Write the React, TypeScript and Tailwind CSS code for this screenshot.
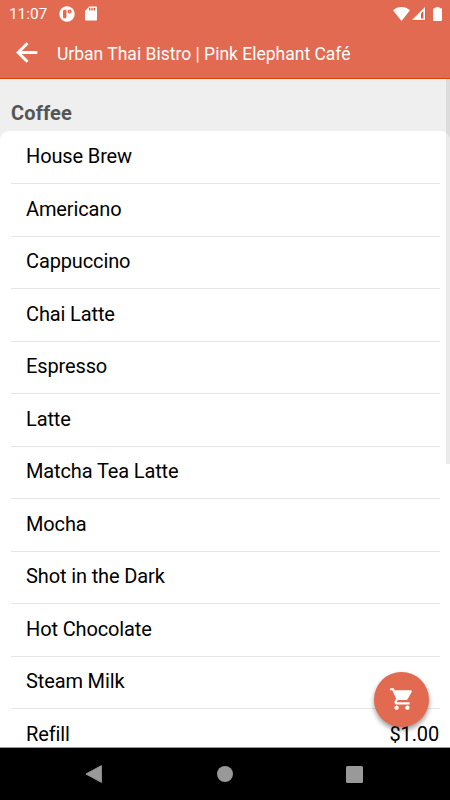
import { MdShoppingCart } from "react-icons/md";

const items = [
  { name: "House Brew" },
  { name: "Americano" },
  { name: "Cappuccino" },
  { name: "Chai Latte" },
  { name: "Espresso" },
  { name: "Latte" },
  { name: "Matcha Tea Latte" },
  { name: "Mocha" },
  { name: "Shot in the Dark" },
  { name: "Hot Chocolate" },
  { name: "Steam Milk" },
  { name: "Refill", price: "$1.00" },
];

function StatusBar() {
  return (
    <div className="flex h-[27px] items-center pl-[9px] pr-2 text-white">
      <span className="w-[50px] pt-px text-[15.5px] leading-[26px] tracking-[-0.1px]">11:07</span>
      <svg className="h-4 w-4" viewBox="0 0 16 16">
        <circle cx="8" cy="8" r="7.7" fill="#fff" />
        <path d="M4 5.200a1.500 1.500 0 0 1 1.500-1.500H7.500v7a1.750 1.750 0 0 1-3.500 0z" fill="#e26a50" />
        <circle cx="10.600" cy="5.600" r="2" fill="#e26a50" />
        <circle cx="10.600" cy="5.600" r="0.700" fill="#f3bfb3" />
      </svg>
      <svg className="ml-[10px] h-[15px] w-3" viewBox="0 0 12 15">
        <path d="M4.500.500H11a1 1 0 0 1 1 1V13.500a1 1 0 0 1-1 1H1a1 1 0 0 1-1-1V5z" fill="#fff" />
        <path d="M4.700 2v2.500M7 2v2.500M9.300 2v2.500" stroke="#e04428" strokeWidth="1.200" />
      </svg>
      <svg className="ml-auto h-[14px] w-[17px]" viewBox="0 0 17 14">
        <path d="M8.500 14 0 3.300C2.300 1.200 5.200 0 8.500 0S14.700 1.200 17 3.300z" fill="#fff" />
      </svg>
      <svg className="ml-px h-[15px] w-[15px]" viewBox="0 0 15 15">
        <path d="M14.500.500v14H.500z" fill="#fff" />
        <path d="M14.500.500v14H.500" fill="none" stroke="#e0471c" strokeWidth="0.800" />
        <path d="M10 7.500 12.300 5v7.500H10z" fill="#e2583c" />
      </svg>
      <svg className="ml-[7px] h-[14px] w-[9px]" viewBox="0 0 9 14">
        <path d="M2.700 0h3.600v1.300H8a1 1 0 0 1 1 1V13a1 1 0 0 1-1 1H1a1 1 0 0 1-1-1V2.300a1 1 0 0 1 1-1h1.700z" fill="#fff" />
      </svg>
    </div>
  );
}

export default function App() {
  return (
    <div className="relative flex h-[800px] w-[450px] flex-col overflow-hidden bg-white font-['Roboto',sans-serif]">
      <header className="h-[79px] shrink-0 border-b border-[#d8430a] bg-[#e26a50]">
        <StatusBar />
        <div className="flex h-[51px] items-center pl-4 text-white">
          <svg className="h-[21px] w-[22px]" viewBox="0 0 22 21" fill="none" stroke="currentColor" strokeWidth="3">
            <path d="M11.500 1.300 2.200 10.500l9.300 9.200M2.200 10.500H21.300" />
          </svg>
          <h1 className="ml-[19px] pt-[3px] text-[17.5px] font-normal">Urban Thai Bistro | Pink Elephant Café</h1>
        </div>
      </header>

      <main className="relative min-h-0 flex-1 overflow-hidden bg-[#efefef]">
        <h2 className="flex h-[51.5px] items-end pb-1 pl-[11px] text-[20px] font-bold leading-7 tracking-[0.15px] text-[#555]">
          Coffee
        </h2>
        <ul className="rounded-t-[9px] bg-white pl-[11px] pr-2.5">
          {items.map((item) => (
            <li
              key={item.name}
              className="flex h-[52.5px] items-center justify-between border-t border-[#e5e5e5] pb-0.5 pl-[15px] pr-px text-[20px] tracking-[-0.13px] text-black first:border-t-0 first:pb-px"
            >
              <span>{item.name}</span>
              {item.price && <span>{item.price}</span>}
            </li>
          ))}
        </ul>
        {/* scrollbar */}
        <div className="absolute right-0 top-0 h-[385px] w-1 bg-black/8" />
      </main>

      <button className="absolute bottom-[73px] right-[21px] flex h-[55px] w-[55px] items-center justify-center rounded-full bg-[#e26a50] pb-px text-white shadow-[0_3px_5px_rgba(0,0,0,0.4)]">
        <MdShoppingCart className="h-[26px] w-[26px]" />
      </button>

      {/* system navigation */}
      <nav className="flex h-[53px] shrink-0 items-center justify-between border-t border-[#999] bg-black pl-[85px] pr-[87px]">
        <svg className="h-[18px] w-[18px]" viewBox="0 0 18 18">
          <path d="M.8 9 16.500.5v17z" fill="#999" stroke="#999" strokeWidth="0.800" strokeLinejoin="round" />
        </svg>
        <div className="h-4 w-4 rounded-full bg-[#999]" />
        <div className="h-[17px] w-[17px] rounded-[1.5px] bg-[#999]" />
      </nav>
    </div>
  );
}
